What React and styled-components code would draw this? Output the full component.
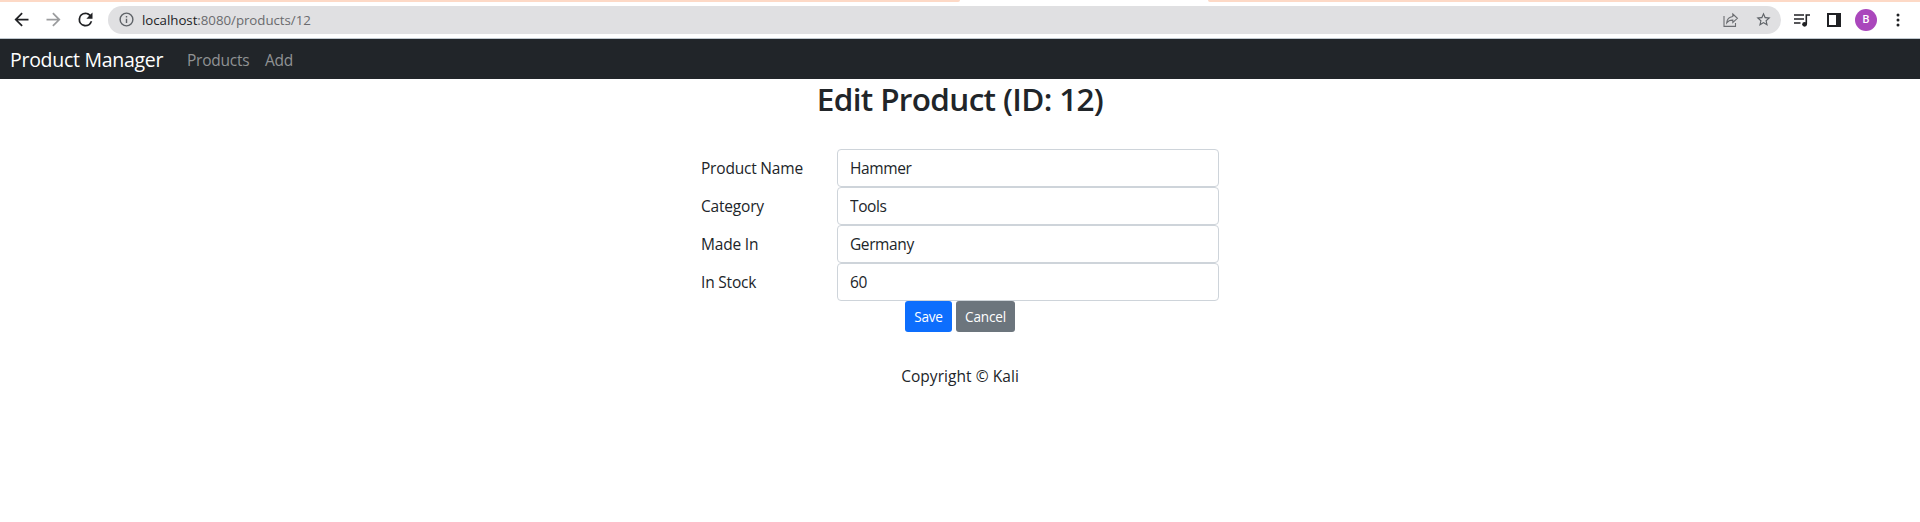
import React from "react";
import styled, { createGlobalStyle } from "styled-components";

const GlobalStyle = createGlobalStyle`
  *, *::before, *::after { box-sizing: border-box; }
  body {
    margin: 0;
    background: #fff;
    color: #212529;
    font-family: "Segoe UI", "Open Sans", "Noto Sans", sans-serif;
    font-size: 15.5px;
    line-height: 24px;
    letter-spacing: -0.4px;
  }
`;

const TabStrip = styled.div`
  display: flex;
  height: 2px;
  background: #fff;
`;
const TabEdge = styled.div`
  width: ${(p) => p.$width};
  flex: ${(p) => (p.$width ? "none" : 1)};
  background: #fdd9c6;
  border-radius: ${(p) => (p.$width ? "0 0 2px 0" : "0 0 0 2px")};
`;
const ActiveTab = styled.div`
  width: 248px;
`;
const Toolbar = styled.div`
  display: flex;
  align-items: center;
  height: 37px;
  padding: 0 6px 1px 9px;
  border-bottom: 1px solid #bfc7ce;
  color: #202124;
`;
const ToolButton = styled.span`
  display: flex;
  flex: none;
  align-items: center;
  justify-content: center;
  width: ${(p) => p.$width || 32}px;
  color: ${(p) => p.$color || "#202124"};
`;
const AddressBar = styled.div`
  display: flex;
  flex: 1;
  align-items: center;
  height: 28px;
  margin-left: 3px;
  padding: 0 2px;
  border-radius: 14px;
  background: #e0e0e2;
`;
const Url = styled.span`
  flex: 1;
  color: #6a6b6e;
  font-size: 13.3px;
  letter-spacing: -0.04px;
`;
const Host = styled.span`
  color: #222326;
`;
const Avatar = styled.span`
  display: flex;
  align-items: center;
  justify-content: center;
  width: 22px;
  height: 22px;
  border-radius: 50%;
  background: #aa47bc;
  color: #fff;
  font: 500 11px/22px Roboto, sans-serif;
  letter-spacing: 0;
`;

const Navbar = styled.nav`
  display: flex;
  align-items: center;
  height: 40px;
  padding: 1px 0 0 10px;
  background: #212529;
`;
const Brand = styled.span`
  width: 177px;
  color: #fff;
  font-size: 19.5px;
  line-height: 30px;
  letter-spacing: -0.28px;
  white-space: nowrap;
`;
const NavLink = styled.span`
  width: ${(p) => p.$width}px;
  color: #909294;
  letter-spacing: -0.25px;
`;

const Main = styled.main`
  display: flex;
  flex-direction: column;
  align-items: center;
`;
const Title = styled.h2`
  margin: 0 0 31px;
  padding-top: 1px;
  font-size: 31.5px;
  font-weight: 600;
  line-height: 38px;
  letter-spacing: -0.66px;
`;
const Form = styled.form`
  width: 518px;
`;
const Field = styled.div`
  display: grid;
  grid-template-columns: 136px 382px;
  align-items: center;
  height: 38px;
`;
const Label = styled.label`
  letter-spacing: -0.2px;
`;
const Input = styled.input`
  width: 382px;
  height: 38px;
  padding: 6px 12px;
  border: 1px solid #ced4da;
  border-radius: 4px;
  background: #fff;
  color: #212529;
  font: inherit;
  letter-spacing: -0.4px;
`;
const Actions = styled.div`
  display: flex;
  justify-content: center;
  gap: 4px;
`;
const Button = styled.button`
  width: ${(p) => p.$width}px;
  height: 31px;
  padding: 1px 0 0;
  border: 0;
  border-radius: 3px;
  background: ${(p) => p.$background};
  color: #fff;
  font: inherit;
  font-size: 13.6px;
  letter-spacing: -0.2px;
`;
const Footer = styled.footer`
  margin-top: 32px;
  letter-spacing: 0.05px;
`;

const fields = [
  { label: "Product Name", value: "Hammer" },
  { label: "Category", value: "Tools" },
  { label: "Made In", value: "Germany" },
  { label: "In Stock", value: "60" },
];

const Glyph = ({ size, d, box = 24 }) => (
  <svg width={size} height={size} viewBox={`0 0 ${box} ${box}`} fill="currentColor">
    <path d={d} />
  </svg>
);

export default function App() {
  return (
    <>
      <GlobalStyle />
      <TabStrip>
        <TabEdge $width="960px" />
        <ActiveTab />
        <TabEdge />
      </TabStrip>
      <Toolbar>
        <ToolButton $width={24}>
          <Glyph size={21} d="M20 11H7.83l5.59-5.59L12 4l-8 8 8 8 1.41-1.41L7.83 13H20v-2z" />
        </ToolButton>
        <ToolButton $width={40} $color="#9b9c9e">
          <Glyph size={21} d="M12 4l-1.41 1.41L16.17 11H4v2h12.17l-5.58 5.59L12 20l8-8z" />
        </ToolButton>
        <ToolButton $width={24}>
          <Glyph size={21} d="M17.65 6.35A7.96 7.96 0 0 0 12 4a8 8 0 1 0 7.73 10h-2.08A6 6 0 1 1 12 6c1.66 0 3.14.69 4.22 1.78L13 11h7V4l-2.35 2.35z" />
        </ToolButton>
        <ToolButton $width={8} />
        <AddressBar>
          <ToolButton $color="#5f6368">
            <Glyph size={17} d="M11 7h2v2h-2zm0 4h2v6h-2zm1-9a10 10 0 1 0 0 20 10 10 0 0 0 0-20zm0 18a8 8 0 1 1 0-16 8 8 0 0 1 0 16z" />
          </ToolButton>
          <Url><Host>localhost</Host>:8080/products/12</Url>
          <ToolButton $color="#6c6e72">
            <svg width="16" height="16" viewBox="0 0 16 16" fill="none" stroke="currentColor" strokeWidth="1.1">
              <path d="M1 4v10.4h11.5V11M9.8 2l4.6 4.3-4.6 4.2V8.1C7 8 5.2 8.8 3.7 10.8c.3-3.5 2.4-5.8 6.1-6.3z" />
            </svg>
          </ToolButton>
          <ToolButton $color="#5f6368">
            <Glyph size={17} d="M22 9.24l-7.19-.62L12 2 9.19 8.63 2 9.24l5.46 4.73L5.82 21 12 17.27 18.18 21l-1.63-7.03L22 9.24zM12 15.4l-3.76 2.27 1-4.28-3.32-2.88 4.38-.38L12 6.1l1.71 4.04 4.38.38-3.32 2.88 1 4.28L12 15.4z" />
          </ToolButton>
        </AddressBar>
        <ToolButton $width={5} />
        <ToolButton>
          <svg width="18" height="16" viewBox="0 0 18 16" fill="none" stroke="currentColor" strokeWidth="1.6">
            <path d="M1 3h10M1 7h10M1 11h6.5M17 3h-3.7v9" />
            <circle cx="11.6" cy="12.3" r="2.4" fill="currentColor" stroke="none" />
          </svg>
        </ToolButton>
        <ToolButton>
          <svg width="14" height="14" viewBox="0 0 14 14">
            <path fill="currentColor" fillRule="evenodd" d="M0 0h14v14H0zM2 2v10h7V2z" />
          </svg>
        </ToolButton>
        <ToolButton><Avatar>B</Avatar></ToolButton>
        <ToolButton>
          <svg width="4" height="14" viewBox="0 0 4 14" fill="currentColor">
            <circle cx="2" cy="2" r="1.5" /><circle cx="2" cy="7" r="1.5" /><circle cx="2" cy="12" r="1.5" />
          </svg>
        </ToolButton>
      </Toolbar>
      <Navbar>
        <Brand>Product Manager</Brand>
        <NavLink $width={78}>Products</NavLink>
        <NavLink>Add</NavLink>
      </Navbar>
      <Main>
        <Title>Edit Product (ID: 12)</Title>
        <Form onSubmit={(e) => e.preventDefault()}>
          {fields.map((f) => (
            <Field key={f.label}>
              <Label htmlFor={f.label}>{f.label}</Label>
              <Input id={f.label} defaultValue={f.value} />
            </Field>
          ))}
          <Actions>
            <Button $width={47} $background="#0d6efd">Save</Button>
            <Button $width={59} $background="#6c757d">Cancel</Button>
          </Actions>
        </Form>
        <Footer>Copyright © Kali</Footer>
      </Main>
    </>
  );
}
